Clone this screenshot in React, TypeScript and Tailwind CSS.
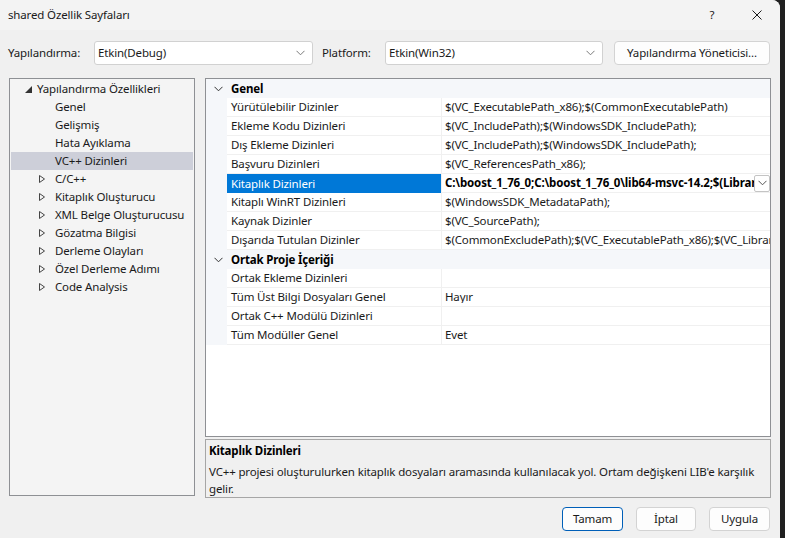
import React from 'react'

const font = { fontFamily: '"Noto Sans", "Open Sans", sans-serif' }

function Chevron({ className = '' }: { className?: string }) {
  return (
    <svg width="9" height="6" viewBox="0 0 9 6" className={className}>
      <polyline points="0.5,0.8 4.5,4.8 8.5,0.8" fill="none" stroke="currentColor" strokeWidth="1" />
    </svg>
  )
}

const tree = [
  { label: 'Genel' },
  { label: 'Gelişmiş' },
  { label: 'Hata Ayıklama' },
  { label: 'VC++ Dizinleri', selected: true },
  { label: 'C/C++', expander: true },
  { label: 'Kitaplık Oluşturucu', expander: true },
  { label: 'XML Belge Oluşturucusu', expander: true },
  { label: 'Gözatma Bilgisi', expander: true },
  { label: 'Derleme Olayları', expander: true },
  { label: 'Özel Derleme Adımı', expander: true },
  { label: 'Code Analysis', expander: true },
]

const sections = [
  {
    title: 'Genel',
    rows: [
      ['Yürütülebilir Dizinler', '$(VC_ExecutablePath_x86);$(CommonExecutablePath)'],
      ['Ekleme Kodu Dizinleri', '$(VC_IncludePath);$(WindowsSDK_IncludePath);'],
      ['Dış Ekleme Dizinleri', '$(VC_IncludePath);$(WindowsSDK_IncludePath);'],
      ['Başvuru Dizinleri', '$(VC_ReferencesPath_x86);'],
      ['Kitaplık Dizinleri', 'C:\\boost_1_76_0;C:\\boost_1_76_0\\lib64-msvc-14.2;$(LibraryPath)'],
      ['Kitaplı WinRT Dizinleri', '$(WindowsSDK_MetadataPath);'],
      ['Kaynak Dizinler', '$(VC_SourcePath);'],
      ['Dışarıda Tutulan Dizinler', '$(CommonExcludePath);$(VC_ExecutablePath_x86);$(VC_LibraryPath_x86)'],
    ],
  },
  {
    title: 'Ortak Proje İçeriği',
    rows: [
      ['Ortak Ekleme Dizinleri', ''],
      ['Tüm Üst Bilgi Dosyaları Genel', 'Hayır'],
      ['Ortak C++ Modülü Dizinleri', ''],
      ['Tüm Modüller Genel', 'Evet'],
    ],
  },
]

function Combo({ value, width }: { value: string; width: string }) {
  return (
    <div className={`${width} h-[24px] bg-white border border-[#d1d1d1] rounded-[3px] flex items-center pl-[3px] pr-[7px] text-[#1a1a1a]`}>
      <span className="flex-1">{value}</span>
      <Chevron className="text-[#7a7a7a]" />
    </div>
  )
}

function Button({ label, width, primary }: { label: string; width: string; primary?: boolean }) {
  return (
    <button
      className={`${width} h-[24px] rounded-[4px] bg-[#fdfdfd] border flex items-center justify-center text-[#1a1a1a] ${
        primary ? 'border-[#005fb8]' : 'border-[#d3d3d3]'
      }`}
    >
      {label}
    </button>
  )
}

export default function App() {
  return (
    <div
      className="w-[785px] h-[538px] bg-[#202020] overflow-hidden text-[11.5px] tracking-[-0.15px] leading-none"
      style={font}
    >
      <div className="w-[780px] h-[538px] bg-[#f0f0f0] rounded-tr-[8px] flex flex-col">
        {/* title bar */}
        <div className="h-[30px] bg-[#f3f3f3] rounded-tr-[8px] flex items-center pl-[8px] text-[#1a1a1a]">
          <span className="flex-1">shared Özellik Sayfaları</span>
          <span className="w-[14px] text-center mr-[33px]">?</span>
          <svg width="10" height="10" viewBox="0 0 10 10" className="mr-[18px] text-[#1a1a1a]">
            <path d="M0.5 0.5 L9.5 9.5 M9.5 0.5 L0.5 9.5" stroke="currentColor" strokeWidth="1" />
          </svg>
        </div>

        {/* toolbar */}
        <div className="mt-[11px] h-[24px] flex items-center pl-[8px] text-[#1a1a1a]">
          <span className="w-[86px]">Yapılandırma:</span>
          <Combo value="Etkin(Debug)" width="w-[219px]" />
          <span className="ml-[9px] w-[63px]">Platform:</span>
          <Combo value="Etkin(Win32)" width="w-[218px]" />
          <button className="ml-[11px] w-[156px] h-[24px] rounded-[4px] bg-[#fdfdfd] border border-[#d3d3d3] text-[#1a1a1a]">
            Yapılandırma Yöneticisi...
          </button>
        </div>

        {/* main */}
        <div className="mt-[13px] flex pl-[9px] gap-[10px]">
          <div className="w-[186px] h-[418px] bg-[#f4f4f4] border border-[#8e9094] p-[1px] text-[#1a1a1a] whitespace-nowrap">
            <div className="h-[18px] flex items-center">
              <svg width="7" height="7" viewBox="0 0 7 7" className="ml-[14px] mr-[5px]">
                <polygon points="7,0 7,7 0,7" fill="#333" />
              </svg>
              <span>Yapılandırma Özellikleri</span>
            </div>
            {tree.map((t) => (
              <div
                key={t.label}
                className={`h-[18px] flex items-center ${t.selected ? 'bg-[#cdcfd9]' : ''}`}
              >
                <span className="w-[44px] flex justify-end pr-[10px]">
                  {t.expander && (
                    <svg width="6" height="8" viewBox="0 0 6 8">
                      <polygon points="0.5,0.5 5.5,4 0.5,7.5" fill="none" stroke="#444" strokeWidth="1" />
                    </svg>
                  )}
                </span>
                <span>{t.label}</span>
              </div>
            ))}
          </div>

          <div className="w-[566px] flex flex-col gap-[2px]">
            <div className="h-[359px] bg-white border border-[#8e9094] overflow-hidden">
              {sections.map((s) => (
                <div key={s.title}>
                  <div className="h-[19px] bg-[#f5f7fa] flex items-center">
                    <span className="w-[25px] flex justify-center">
                      <Chevron className="text-[#333]" />
                    </span>
                    <span className="font-bold text-black">{s.title}</span>
                  </div>
                  {s.rows.map(([name, value]) => {
                    const sel = name === 'Kitaplık Dizinleri'
                    return (
                      <div key={name} className="h-[19px] flex">
                        <div className="w-[21px] bg-[#f5f7fa]" />
                        <div
                          className={`w-[215px] flex items-center pl-[4px] border-r border-[#f0f0f0] whitespace-nowrap ${
                            sel ? 'bg-[#0078d7] text-white' : 'border-b text-[#1a1a1a]'
                          }`}
                        >
                          {name}
                        </div>
                        <div className="flex-1 min-w-0 flex items-center border-b border-[#f0f0f0] pl-[3px]">
                          <span
                            className={`flex-1 whitespace-nowrap overflow-hidden ${
                              sel ? 'font-bold text-black' : 'text-[#1a1a1a]'
                            }`}
                          >
                            {value}
                          </span>
                          {sel && (
                            <span className="w-[16px] h-[17px] bg-white border border-[#c4c4c4] rounded-[2px] flex items-center justify-center shrink-0">
                              <Chevron className="text-[#555]" />
                            </span>
                          )}
                        </div>
                      </div>
                    )
                  })}
                </div>
              ))}
            </div>

            <div className="h-[59px] bg-[#f0f0f0] border border-[#a6a6a6] px-[3px] pt-[5px] text-[#1a1a1a]">
              <div className="font-bold text-black h-[13px]">Kitaplık Dizinleri</div>
              <div className="mt-[5px] leading-[17px]">
                VC++ projesi oluşturulurken kitaplık dosyaları aramasında kullanılacak yol. Ortam değişkeni LIB'e karşılık gelir.
              </div>
            </div>
          </div>
        </div>

        {/* buttons */}
        <div className="mt-[9px] flex justify-end gap-[13px] pr-[10px]">
          <Button label="Tamam" width="w-[61px]" primary />
          <Button label="İptal" width="w-[60px]" />
          <Button label="Uygula" width="w-[61px]" />
        </div>
      </div>
    </div>
  )
}
